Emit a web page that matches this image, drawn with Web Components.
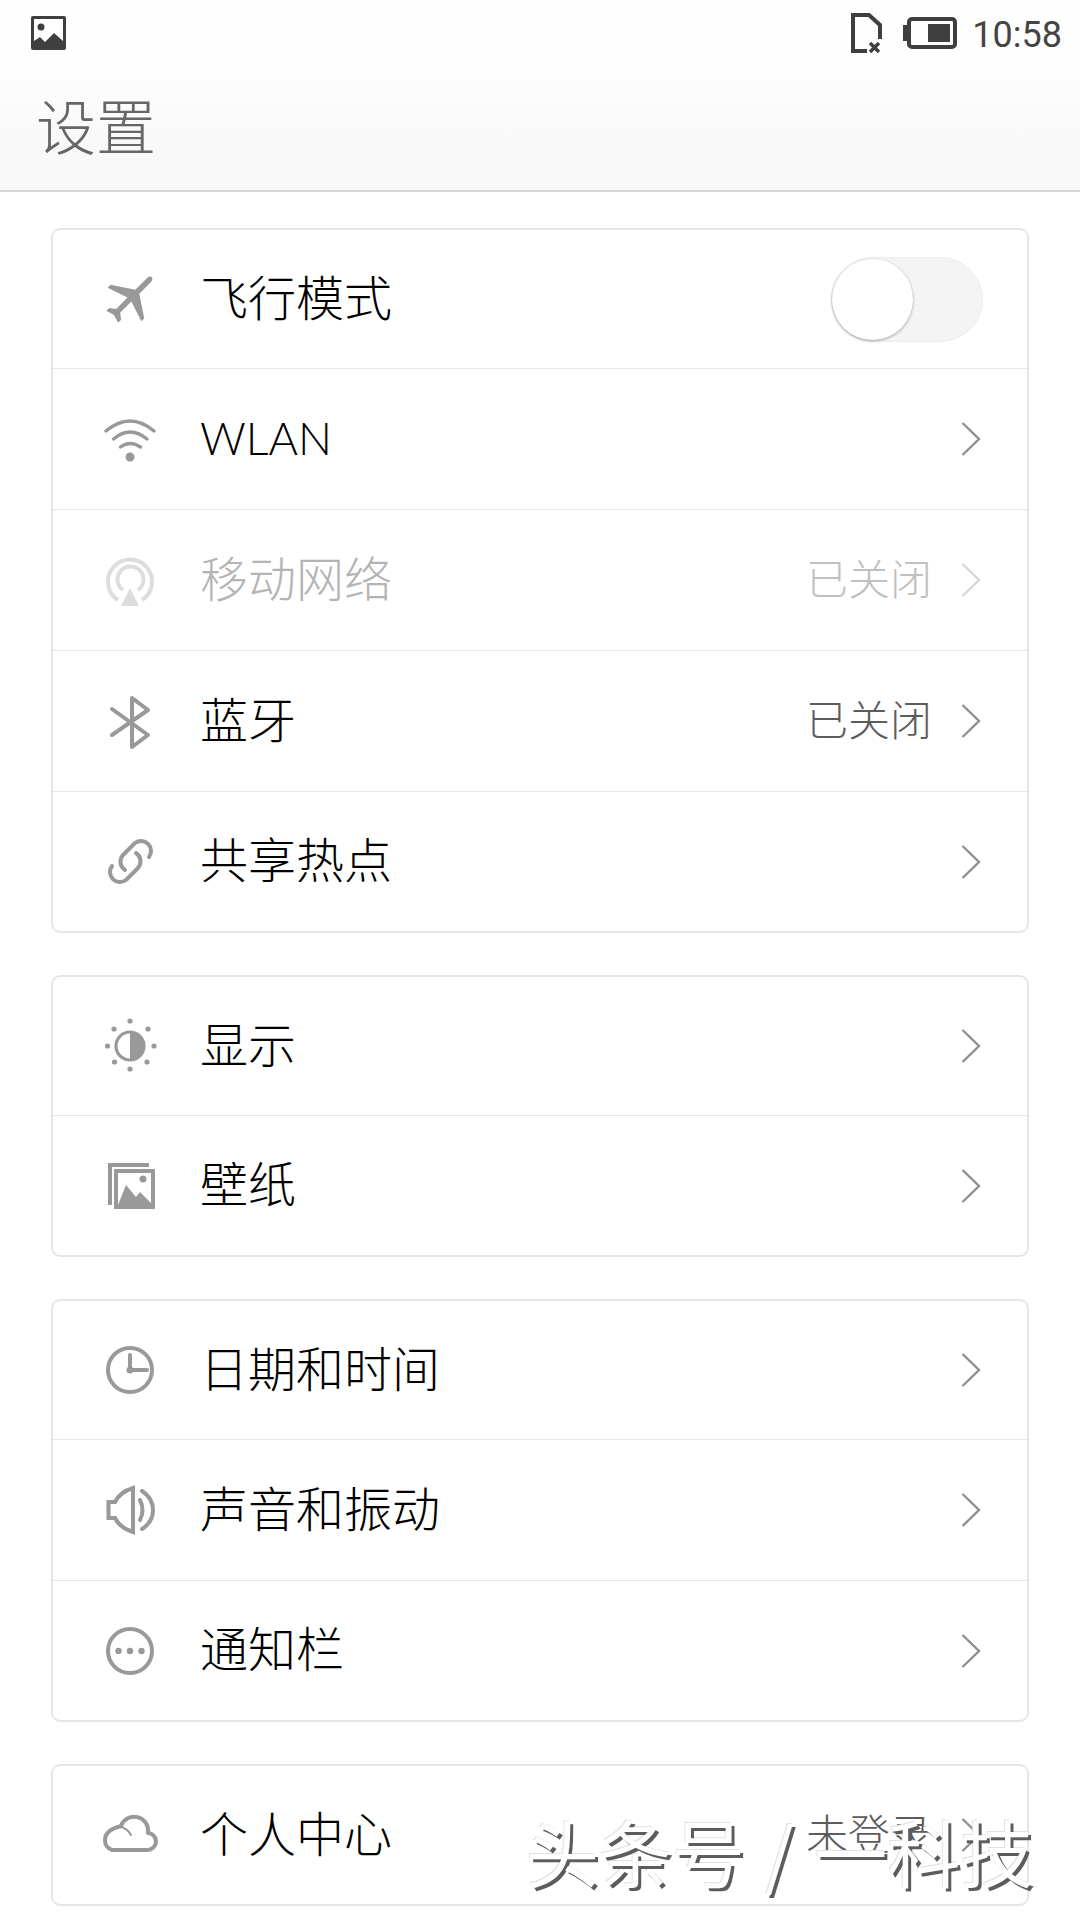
<!DOCTYPE html>
<html lang="zh-CN">
<head>
<meta charset="utf-8">
<title>设置</title>
<style>
    html, body { margin: 0; padding: 0; background: #fff; }
    body {
        width: 1080px;
        height: 1920px;
        overflow: hidden;
        position: relative;
        font-family: "Noto Sans CJK SC", "Liberation Sans", sans-serif;
    }
    svg.ic { fill: none; stroke: #999; stroke-width: 4; stroke-linecap: round; stroke-linejoin: round; }
    svg.ic .solid { fill: #999; stroke: none; }
</style>
</head>
<body>
<template id="settings-row-tpl">
    <style>
        :host {
            display: flex;
            align-items: center;
            box-sizing: border-box;
            height: 141px;
            border-top: 1px solid #e8e8e8;
            padding-left: 47px;
            color: #000;
            font-size: 48px;
            font-weight: 300;
        }
        :host(:first-child) { height: 138px; border-top: none; }
        :host(:last-child:not(:first-child)) { height: 140px; }
        ::slotted([slot="icon"]) { width: 60px; height: 60px; flex: none; }
        .label { margin-left: 40px; padding-bottom: 9px; flex: 1; white-space: nowrap; line-height: 1; }
        .value { font-size: 42px; color: #5c5c5c; margin-right: 29px; padding-bottom: 7px; line-height: 1; }
        .arrow { width: 20px; height: 34px; margin-right: 46px; flex: none; }
        .arrow path { fill: none; stroke: #8f8f8f; stroke-width: 2.4; }
        :host([disabled]) { color: #b4b4b4; }
        :host([disabled]) .value { color: #c0c0c0; }
        :host([disabled]) .arrow path { stroke: #d8d8d8; }
    </style>
    <slot name="icon"></slot>
    <span class="label"><slot></slot></span>
    <span class="value"></span>
    <svg class="arrow" viewBox="0 0 20 34"><path d="M1.5 1 L18 17 L1.5 33"/></svg>
</template>

<template id="switch-row-tpl">
    <style>
        :host {
            display: flex;
            align-items: center;
            box-sizing: border-box;
            height: 138px;
            padding-left: 47px;
            color: #000;
            font-size: 48px;
            font-weight: 300;
        }
        ::slotted([slot="icon"]) { width: 60px; height: 60px; flex: none; }
        .label { margin-left: 40px; padding-bottom: 9px; flex: 1; white-space: nowrap; line-height: 1; }
        .track {
            position: relative;
            box-sizing: border-box;
            width: 152px;
            height: 85px;
            margin-right: 44px;
            border-radius: 43px;
            background: #f4f4f4;
            border: 1px solid #ececec;
        }
        .thumb {
            position: absolute;
            left: 0;
            top: 1px;
            width: 81px;
            height: 81px;
            border-radius: 50%;
            background: #fff;
            box-shadow: 0 1px 3px rgba(0,0,0,.35);
        }
    </style>
    <slot name="icon"></slot>
    <span class="label"><slot></slot></span>
    <div class="track"><div class="thumb"></div></div>
</template>

<status-bar>10:58</status-bar>
<app-header>设置</app-header>

<settings-list>
    <settings-card>
        <switch-row>
            <svg slot="icon" class="ic" viewBox="99 269 60 60"><g transform="translate(131 297) rotate(45) scale(2.8) translate(-12 -12)"><path class="solid" d="M20.500 15.800v-1.500l-7.500-5V3.500C13 2.600 12.500 2 12 2s-1 .6-1 1.500v5.800l-7.500 5v1.500l7.500-2.500V19l-2 1.500V22l3-.9 3 .9v-1.500L13 19v-5.700z"/></g></svg>
            飞行模式
        </switch-row>
        <settings-row>
            <svg slot="icon" class="ic" viewBox="99 409 60 60" style="stroke-width:3.4"><path d="M105 431 Q129 411 153 431"/><path d="M112.500 439 Q129 425 146 439"/><path d="M119.500 447 Q129 440 139.500 447"/><circle class="solid" cx="129" cy="457" r="4.500"/></svg>
            <span style="display:inline-block;padding-top:7px;font-family:Lato,sans-serif;font-weight:300;font-size:45px">WLAN</span>
        </settings-row>
        <settings-row disabled value="已关闭">
            <svg slot="icon" class="ic" viewBox="99 550 60 60" style="stroke:#ddd;stroke-linecap:butt"><path d="M117 600 A22 22 0 1 1 141 600"/><path d="M122 590 A13 13 0 1 1 137 590"/><path class="solid" style="fill:#ddd" d="M129 588 L138 606 H120 Z"/></svg>
            移动网络
        </settings-row>
        <settings-row value="已关闭">
            <svg slot="icon" class="ic" viewBox="100 691 60 60"><path d="M112 709 L148 735 L132 747 V698 L148 710 L112 735"/></svg>
            蓝牙
        </settings-row>
        <settings-row>
            <svg slot="icon" class="ic" viewBox="99 832 60 60"><path d="M148 857 A10 10 0 0 0 134 843 L122 855 A10 10 0 0 0 124 870"/><path d="M111 866 A10 10 0 0 0 125 880 L137 868 A10 10 0 0 0 135 853"/></svg>
            共享热点
        </settings-row>
    </settings-card>

    <settings-card>
        <settings-row>
            <svg slot="icon" class="ic" viewBox="99 1015 60 60" style="stroke-width:3.200"><circle cx="129" cy="1045" r="14"/><path class="solid" d="M129 1031 A14 14 0 0 1 129 1059 Z"/><g class="solid"><circle class="solid" cx="129" cy="1020" r="2.600"/><circle class="solid" cx="129" cy="1068" r="2.600"/><circle class="solid" cx="106.500" cy="1045" r="2.600"/><circle class="solid" cx="153" cy="1045" r="2.600"/><circle class="solid" cx="113" cy="1028" r="2.600"/><circle class="solid" cx="147" cy="1028" r="2.600"/><circle class="solid" cx="113.500" cy="1061" r="2.600"/><circle class="solid" cx="146" cy="1061" r="2.600"/></g></svg>
            显示
        </settings-row>
        <settings-row>
            <svg slot="icon" class="ic" viewBox="99 1156 60 60" style="stroke-linecap:butt;stroke-linejoin:miter"><path d="M109 1205 V1165 H148"/><rect x="115" y="1171" width="37" height="36"/><path class="solid" d="M117 1205 L125 1185 L135 1197 L139 1192 L150 1203 V1207 H117 Z"/><circle class="solid" cx="142" cy="1179" r="3.500"/></svg>
            壁纸
        </settings-row>
    </settings-card>

    <settings-card>
        <settings-row>
            <svg slot="icon" class="ic" viewBox="100 1339 60 60"><circle cx="130" cy="1369" r="22"/><path d="M130 1354 V1369 H147"/><circle class="solid" cx="130" cy="1369" r="3.500"/></svg>
            日期和时间
        </settings-row>
        <settings-row>
            <svg slot="icon" class="ic" viewBox="100 1480 60 60"><path d="M133 1488 V1532 Q120 1528 115 1518 H108.500 V1502 H115 Q120 1492 133 1488 Z" style="stroke-linejoin:miter;stroke-linecap:butt"/><path d="M140 1500 Q145 1510 140 1520"/><path d="M142 1491 Q153 1498 153 1510 Q153 1522 142 1529"/></svg>
            声音和振动
        </settings-row>
        <settings-row>
            <svg slot="icon" class="ic" viewBox="100 1621 60 60"><circle cx="130" cy="1651" r="22"/><circle class="solid" cx="118.500" cy="1651" r="3.200"/><circle class="solid" cx="130" cy="1651" r="3.200"/><circle class="solid" cx="141.500" cy="1651" r="3.200"/></svg>
            通知栏
        </settings-row>
    </settings-card>

    <settings-card>
        <settings-row value="未登录">
            <svg slot="icon" class="ic" viewBox="100 1805 60 60"><path d="M112 1850 H147 A8.500 8.500 0 0 0 148 1833 A14 14 0 0 0 121 1826 Q105 1830 105 1840 A10 10 0 0 0 112 1850 Z"/><path d="M118 1827 Q126 1826 131 1835" style="stroke-width:2"/></svg>
            个人中心
        </settings-row>
    </settings-card>
</settings-list>

<water-mark>头条号 / 一科技</water-mark>

<script>
class StatusBar extends HTMLElement {
    constructor() {
        super();
        this.attachShadow({ mode: 'open' });
        this.shadowRoot.innerHTML = `
        <style>
            :host {
                display: flex;
                align-items: center;
                box-sizing: border-box;
                height: 66px;
                padding: 0 18px 0 31px;
                color: #444;
                background: #fefefe;
                font-family: Roboto, "Liberation Sans", sans-serif;
                font-size: 36px;
            }
            .grow { flex: 1; }
            svg { display: block; flex: none; }
            .time { margin-left: 15px; padding-top: 4px; line-height: 1; }
        </style>
        <svg width="35" height="35" viewBox="0 0 35 35">
            <rect width="35" height="34" rx="2" fill="#3f3f3f"/>
            <path fill="#fff" d="M3 3 H32 V25 L23 17 L14 26 L9 21 L3 25 Z"/>
            <circle cx="10" cy="11" r="3.500" fill="#3f3f3f"/>
        </svg>
        <div class="grow"></div>
        <svg width="32" height="40" viewBox="0 0 32 40" fill="none" stroke="#3f3f3f" stroke-width="4">
            <path d="M17 38 H3 V2 H19 L30 12 V26"/>
            <path d="M20 30 L29 39 M29 30 L20 39" stroke-width="3.500"/>
        </svg>
        <svg width="54" height="32" viewBox="0 0 54 32" style="margin-left:21px">
            <path d="M0 8 H5 V24 H0 Z" fill="#3f3f3f"/>
            <rect x="6" y="2" width="46" height="28" rx="3" fill="none" stroke="#3f3f3f" stroke-width="4"/>
            <rect x="25" y="7" width="22" height="18" fill="#3f3f3f"/>
        </svg>
        <span class="time"><slot></slot></span>`;
    }
}

class AppHeader extends HTMLElement {
    constructor() {
        super();
        this.attachShadow({ mode: 'open' });
        this.shadowRoot.innerHTML = `
        <style>
            :host {
                display: flex;
                align-items: center;
                box-sizing: border-box;
                height: 126px;
                padding: 0 0 10px 36px;
                border-bottom: 2px solid #d6d6d6;
                background: linear-gradient(#fefefe, #f8f8f8 70%);
                color: #666;
                font-size: 60px;
                font-weight: 300;
            }
        </style>
        <slot></slot>`;
    }
}

class SettingsList extends HTMLElement {
    constructor() {
        super();
        this.attachShadow({ mode: 'open' });
        this.shadowRoot.innerHTML = `
        <style>
            :host {
                display: flex;
                flex-direction: column;
                gap: 42px;
                padding: 36px 51px 0 51px;
            }
        </style>
        <slot></slot>`;
    }
}

class SettingsCard extends HTMLElement {
    constructor() {
        super();
        this.attachShadow({ mode: 'open' }).innerHTML = `
        <style>
            :host {
                display: block;
                border: 2px solid #e6e6e6;
                border-radius: 9px;
                background: #fff;
            }
        </style>
        <slot></slot>`;
    }
}

class SettingsRow extends HTMLElement {
    constructor() {
        super();
        this.attachShadow({ mode: 'open' });
        this.shadowRoot.appendChild(document.getElementById('settings-row-tpl').content.cloneNode(true));
    }

    connectedCallback() {
        this.shadowRoot.querySelector('.value').textContent = this.getAttribute('value') || '';
    }
}

class SwitchRow extends HTMLElement {
    constructor() {
        super();
        this.attachShadow({ mode: 'open' });
        this.shadowRoot.appendChild(document.getElementById('switch-row-tpl').content.cloneNode(true));
    }
}

class WaterMark extends HTMLElement {
    constructor() {
        super();
        this.attachShadow({ mode: 'open' });
        this.shadowRoot.innerHTML = `
        <style>
            :host {
                position: absolute;
                left: 526px;
                top: 1807px;
                font-size: 73px;
                font-weight: 400;
                word-spacing: 4px;
                line-height: 1.2;
                white-space: nowrap;
                color: #fff;
                text-shadow: 3px 3px 0 #5c5c5c, -1px -1px 0 #e2e2e2;
            }
        </style>
        <slot></slot>`;
    }
}

customElements.define('status-bar', StatusBar);
customElements.define('app-header', AppHeader);
customElements.define('settings-list', SettingsList);
customElements.define('settings-card', SettingsCard);
customElements.define('settings-row', SettingsRow);
customElements.define('switch-row', SwitchRow);
customElements.define('water-mark', WaterMark);
</script>
</body>
</html>
